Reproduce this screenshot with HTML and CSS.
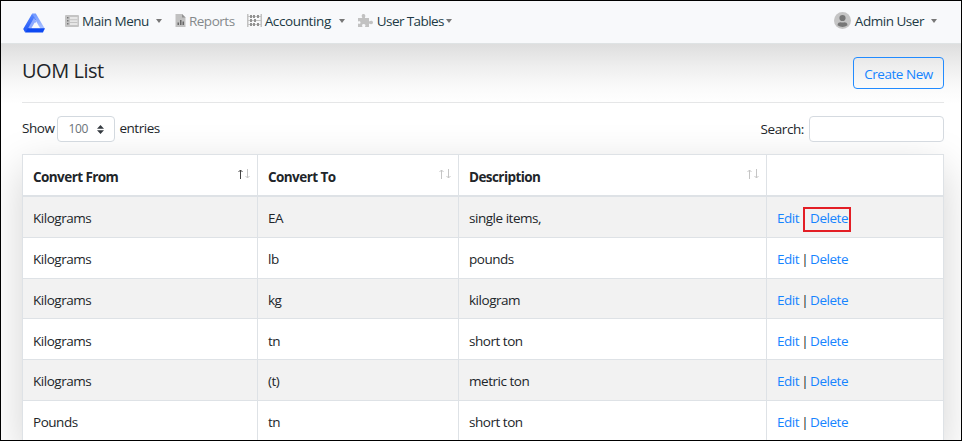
FILE: index.html
```html
<!DOCTYPE html>
<html lang="en">
<head>
<meta charset="utf-8">
<title>UOM List</title>
<link rel="stylesheet" href="styles.css">
</head>
<body>
<div class="app">
  <nav class="navbar">
    <svg class="logo" viewBox="0 0 22 20"><defs><linearGradient id="side" x1="0" y1="0" x2="0" y2="1"><stop offset="0" stop-color="#5b89ff"/><stop offset="1" stop-color="#1f55f5"/></linearGradient><linearGradient id="edge" x1="0" y1="0" x2="0" y2="1"><stop offset="0" stop-color="#6f98ff"/><stop offset="1" stop-color="#b5c8ff"/></linearGradient></defs><path fill="url(#edge)" d="M9.200.5h3.600L22 16l-1 1.500L17 15 11 4.800z"/><path fill="url(#side)" d="M9.200.5L13 7l-2 .8L6.200 16 2 19.200.2 16z"/><path fill="#8eabff" d="M11 4.800l2.200 3.700L9 15.500H5z"/><path fill="#0d49f2" d="M5 15.300h16.800L20 19.500H2z"/><path fill="#f8f9fb" d="M11.700 9.500l3.200 5.400H8.500z"/></svg>
    <a class="item menu"><svg class="ic-list" viewBox="0 0 14 12"><rect width="14" height="12" rx="1" fill="#c4c4c4"/><path fill="#e6e6e6" d="M5 2h7.500v8H5z"/><path fill="#c4c4c4" d="M5 4.200h7.500v1H5zM5 7h7.500v1H5z"/><path fill="#777" d="M2 2h1.500v1.500H2zM2 5h1.500v1.500H2zM2 8h1.500v1.500H2z"/></svg><span>Main Menu</span><i class="caret"></i></a>
    <a class="item muted reports"><svg class="ic-file" viewBox="0 0 10 13"><path fill="#c1c1c1" d="M0 0h6.500L10 3.500V13H0z"/><path fill="#929292" d="M6.500 0L10 3.500H6.500z"/><path fill="#686868" d="M2 8.500h1.500V11H2zM4.500 6H6v5H4.500zM7 7.500h1.500V11H7z"/></svg><span>Reports</span></a>
    <a class="item accounting"><svg class="ic-abacus" viewBox="0 0 15 13"><path fill="#c2c2c2" d="M0 0h1.500v13H0zM13.500 0H15v13h-1.500zM1 2h13v1H1zM1 6h13v1H1zM1 10h13v1H1z"/><path fill="#929292" d="M3 1h2v3H3zM6 1h2v3H6zM10 1h2v3h-2zM3 5h2v3H3zM7 5h2v3H7zM3 9h2v3H3zM6 9h2v3H6zM10 9h2v3h-2z"/></svg><span>Accounting</span><i class="caret"></i></a>
    <a class="item tables"><svg class="ic-puzzle" viewBox="0 0 15 13"><path fill="#c2c2c2" d="M0 4h4.400C3 1.400 4 0 5.500 0S8 1.400 6.800 4H11v3.500c2-1.200 4-.7 4 1s-2 2.200-4 1V13H7c1-2.300.2-3-1.300-3S3.500 10.700 4.500 13H0V9.500c2 .8 2.500 0 2.500-1S2 6.700 0 7.500z"/></svg><span>User Tables</span><i class="caret"></i></a>
    <a class="item user"><svg class="ic-user" viewBox="0 0 17 17"><circle cx="8.500" cy="8.500" r="8.500" fill="#c5c5c5"/><circle cx="8.500" cy="6" r="3.100" fill="#777"/><path fill="#777" d="M3.500 13.200c0-2.400 2-3 3-3q2 .8 4 0c1 0 3 .6 3 3q-5 3.500-10 0z"/></svg><span>Admin User</span><i class="caret"></i></a>
  </nav>
  <main class="page">
    <header class="heading"><h1>UOM List</h1><button class="create">Create New</button></header>
    <div class="controls">
      <label class="length"><span>Show</span><span class="select"><span>100</span><svg viewBox="0 0 7 9"><path fill="#343a40" d="M0 3.800L3.500 0 7 3.800zM0 5.200h7L3.500 9z"/></svg></span><span>entries</span></label>
      <label class="search"><span>Search:</span><input type="text"></label>
    </div>
    <div class="table">
      <div class="row head"><div>Convert From<svg class="sort asc" viewBox="0 0 12 10"><path class="up" d="M2.500 10V1M.5 3l2-2 2 2"/><path class="down" d="M9.500 0v9M7.500 7l2 2 2-2"/></svg></div><div>Convert To<svg class="sort" viewBox="0 0 12 10"><path class="up" d="M2.500 10V1M.5 3l2-2 2 2"/><path class="down" d="M9.500 0v9M7.500 7l2 2 2-2"/></svg></div><div>Description<svg class="sort" viewBox="0 0 12 10"><path class="up" d="M2.500 10V1M.5 3l2-2 2 2"/><path class="down" d="M9.500 0v9M7.500 7l2 2 2-2"/></svg></div><div></div></div>
      <div class="row"><div>Kilograms</div><div>EA</div><div>single items,</div><div><a class="link">Edit</a><b></b><a class="link marked">Delete</a></div></div>
      <div class="row"><div>Kilograms</div><div>lb</div><div>pounds</div><div><a class="link">Edit</a><b>|</b><a class="link">Delete</a></div></div>
      <div class="row"><div>Kilograms</div><div>kg</div><div>kilogram</div><div><a class="link">Edit</a><b>|</b><a class="link">Delete</a></div></div>
      <div class="row"><div>Kilograms</div><div>tn</div><div>short ton</div><div><a class="link">Edit</a><b>|</b><a class="link">Delete</a></div></div>
      <div class="row"><div>Kilograms</div><div>(t)</div><div>metric ton</div><div><a class="link">Edit</a><b>|</b><a class="link">Delete</a></div></div>
      <div class="row"><div>Pounds</div><div>tn</div><div>short ton</div><div><a class="link">Edit</a><b>|</b><a class="link">Delete</a></div></div>
    </div>
  </main>
</div>
</body>
</html>
```
FILE: styles.css
```css
* { box-sizing: border-box; }
body { margin: 0; font: 13.5px/20px "Open Sans", "Noto Sans", sans-serif; color: #212529; letter-spacing: -.47px; }
.app { width: 962px; height: 441px; border: 1px solid #000; overflow: hidden; background: #fff; }
.navbar { height: 43px; background: #f8f9fb; border-bottom: 1px solid #dfe3e4; display: flex; align-items: center; padding: 0 24px 3px 22px; }
.logo { width: 22px; height: 20px; margin-top: 5px; flex: none; }
.item { display: flex; align-items: center; color: #213944; white-space: nowrap; }
.item svg { flex: none; margin-right: 3px; }
.muted { color: #85898c; }
.menu { margin-left: 20px; }
.reports { margin-left: 13px; }
.accounting { margin-left: 12px; letter-spacing: -.38px; }
.tables { margin-left: 13px; letter-spacing: -.6px; }
.user { margin-left: auto; }
.ic-list { width: 14px; height: 12px; }
.ic-file { width: 11px; height: 13px; }
.ic-abacus { width: 15px; height: 13px; }
.ic-puzzle { width: 15px; height: 13px; }
.item .ic-user { width: 17px; height: 17px; margin-right: 4px; }
.caret { border: 3.5px solid transparent; border-top: 4px solid #777; border-bottom: 0; margin-left: 7px; }
.accounting .caret { margin-left: 8px; }
.tables .caret { margin-left: 2px; }
.tables svg { margin-right: 4px; }
.page { height: 397px; padding: 0 17px 0 21px; background: linear-gradient(#dedede, #eee 22px, #fafafa 43px, #fff 60px); }
.heading { height: 59px; display: flex; justify-content: space-between; border-bottom: 1px solid #e5e6e7; }
h1 { font-size: 20px; line-height: 26px; font-weight: 400; margin: 14px 0 0; }
.create { height: 32px; width: 91px; margin-top: 13px; border: 1px solid #228bff; border-radius: 4px; background: transparent; color: #1684ff; font: inherit; letter-spacing: -.45px; padding: 1px 0 0; white-space: nowrap; }
.controls { height: 51px; display: flex; justify-content: space-between; padding-top: 13px; }
.controls label { display: flex; height: 26px; }
.select { width: 58px; height: 26px; border: 1px solid #d3d9df; border-radius: 4px; background: #fff; margin: 0 4px 0 3px; padding: 0 10px; display: flex; align-items: center; justify-content: space-between; font-size: 12px; letter-spacing: -.3px; color: #6b7278; }
.select svg { width: 7px; height: 9px; }
.length > span:not(.select) { line-height: 24px; }
.search { line-height: 26px; letter-spacing: -.4px; }
.search input { width: 135px; height: 26px; border: 1px solid #d5dae0; border-radius: 4px; margin-left: 5px; padding: 0 8px; background: #fff; }
.table { background: #fff; border: 1px solid #dee2e6; box-shadow: 0 14px 41px rgba(0,0,0,.175); }
.row { display: grid; grid-template-columns: 235px 201px 308px 1fr; height: 40.750px; }
.row > div { display: flex; align-items: center; padding: 3px 10px 0; border-right: 1px solid #dee2e6; border-bottom: 1px solid #dee2e6; white-space: nowrap; }
.row > div:last-child { border-right: 0; }
.row:nth-child(even) { background: #f2f2f2; }
.row.head { height: 42px; font-weight: 700; letter-spacing: -.57px; }
.row.head > div { border-bottom-width: 2px; padding-top: 3px; }
.sort { width: 12px; height: 10px; margin: -5px -3px 0 auto; fill: none; stroke: #c5c5c5; }
.asc .up { stroke: #444; }
.link { color: #1684ff; }
.row b { font-weight: 400; width: 11px; text-align: center; }
.marked { position: relative; }
.marked::after { content: ""; position: absolute; inset: -1px -3px -4px -7px; border: 2px solid #e31e25; }
```
